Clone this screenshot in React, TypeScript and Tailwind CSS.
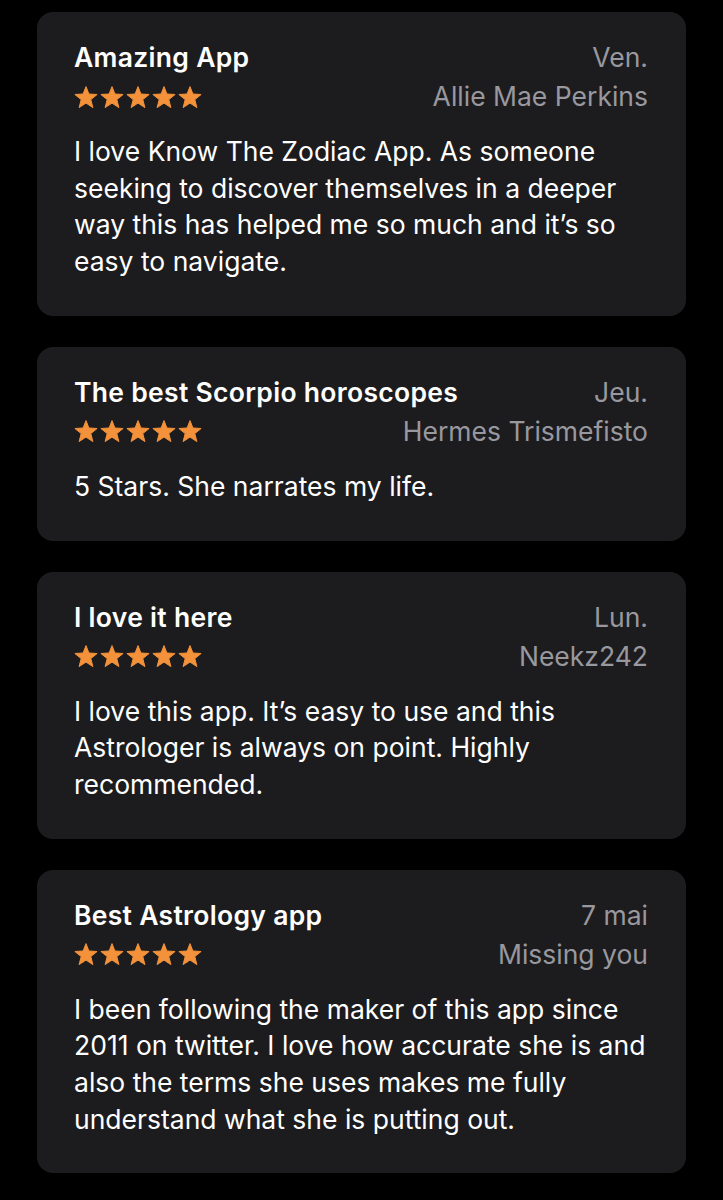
import React from "react";

const reviews = [
  {
    title: "Amazing App",
    date: "Ven.",
    author: "Allie Mae Perkins",
    body: "I love Know The Zodiac App. As someone seeking to discover themselves in a deeper way this has helped me so much and it’s so easy to navigate.",
  },
  {
    title: "The best Scorpio horoscopes",
    date: "Jeu.",
    author: "Hermes Trismefisto",
    body: "5 Stars. She narrates my life.",
  },
  {
    title: "I love it here",
    date: "Lun.",
    author: "Neekz242",
    body: "I love this app. It’s easy to use and this Astrologer is always on point. Highly recommended.",
  },
  {
    title: "Best Astrology app",
    date: "7 mai",
    author: "Missing you",
    body: "I been following the maker of this app since 2011 on twitter. I love how accurate she is and also the terms she uses makes me fully understand what she is putting out.",
  },
];

function Star() {
  return (
    <svg width="24" height="23" viewBox="0 0 24 23" className="block">
      <path
        d="M12 0.6 L14.9 8 L23.1 8.5 L16.8 13.6 L18.9 21.6 L12 17.1 L5.1 21.6 L7.2 13.6 L0.9 8.5 L9.1 8 Z"
        fill="#f3923a"
        stroke="#f3923a"
        strokeWidth="1"
        strokeLinejoin="round"
      />
    </svg>
  );
}

function Card({ r }: { r: (typeof reviews)[number] }) {
  return (
    <div className="bg-[#1c1c1e] rounded-[16px] pl-[37px] pr-[38px] pt-[30px] pb-[36px]">
      <div className="flex justify-between items-center h-[32px]">
        <div className="text-white text-[26.5px] font-semibold tracking-[0.3px]">{r.title}</div>
        <div className="text-[#98989e] text-[26.5px]">{r.date}</div>
      </div>
      <div className="flex justify-between items-center h-[32px] mt-[7px]">
        <div className="flex gap-[2px]">
          {[0, 1, 2, 3, 4].map((i) => (
            <Star key={i} />
          ))}
        </div>
        <div className="text-[#98989e] text-[26.5px]">{r.author}</div>
      </div>
      <div className="text-white text-[26.5px] leading-[36.7px] mt-[20px]">{r.body}</div>
    </div>
  );
}

export default function App() {
  return (
    <div
      className="bg-black min-h-[1200px] w-[723px] pt-[12px] pl-[37px] pr-[37px] flex flex-col gap-[31px]"
      style={{ fontFamily: "Inter, 'Noto Sans', sans-serif" }}
    >
      {reviews.map((r) => (
        <Card key={r.title} r={r} />
      ))}
    </div>
  );
}
